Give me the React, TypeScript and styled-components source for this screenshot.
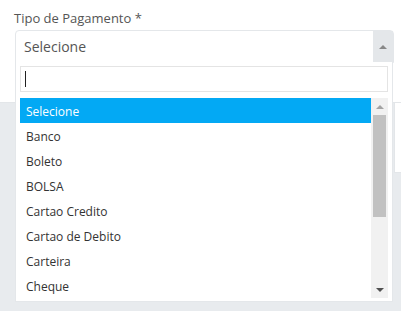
import React from 'react';
import styled, { createGlobalStyle } from 'styled-components';

const GlobalStyle = createGlobalStyle`
  html, body {
    margin: 0;
    padding: 0;
    background: #e8ebee;
    font-family: 'Open Sans', 'Liberation Sans', sans-serif;
  }
  * {
    box-sizing: border-box;
  }
`;

const Page = styled.div`
  width: 401px;
  height: 311px;
  overflow: hidden;
  display: flex;
  flex-direction: column;
`;

const Card = styled.div`
  background: #fff;
  height: 103px;
  padding: 8px 7px 0 15px;
  border-bottom: 1px solid #e3e6e9;
`;

const Label = styled.label`
  display: block;
  margin-left: -1px;
  font-size: 13px;
  line-height: 20px;
  color: #555;
`;

const SelectWrap = styled.div`
  position: relative;
  margin-top: 2px;
`;

const SelectBox = styled.div`
  display: flex;
  height: 33px;
  border: 1px solid #e4e7ea;
  border-radius: 4px 4px 0 0;
  background: #fff;
`;

const SelectText = styled.span`
  flex: 1;
  padding-left: 8px;
  font-size: 14px;
  line-height: 31px;
  color: #555;
`;

const ArrowCell = styled.span`
  width: 20px;
  display: flex;
  align-items: center;
  justify-content: center;
  background: #e4e7ea;
`;

const Triangle = styled.span<{ $dir: 'up' | 'down'; $color: string; $size?: number }>`
  width: 0;
  height: 0;
  border-left: ${({ $size }) => $size ?? 4}px solid transparent;
  border-right: ${({ $size }) => $size ?? 4}px solid transparent;
  ${({ $dir, $color, $size }) =>
    $dir === 'up'
      ? `border-bottom: ${$size ?? 4}px solid ${$color};`
      : `border-top: ${$size ?? 4}px solid ${$color};`}
`;

const Dropdown = styled.div`
  position: absolute;
  top: 32px;
  left: 0;
  width: 378px;
  background: #fff;
  border: 1px solid #e4e7ea;
  border-top: none;
  padding: 4px 4px 3px 4px;
  z-index: 10;
`;

const Search = styled.div`
  height: 26px;
  border: 1px solid #e4e4e4;
  padding: 4px 4px;
  display: flex;
  align-items: center;
`;

const Caret = styled.span`
  width: 1px;
  height: 16px;
  background: #222;
`;

const ListArea = styled.div`
  margin-top: 6px;
  display: flex;
  height: 200px;
`;

const Options = styled.ul`
  flex: 1;
  list-style: none;
  margin: 0;
  padding: 0;
`;

const Option = styled.li<{ $active?: boolean }>`
  height: 25px;
  line-height: 25px;
  padding: 1px 0 0 6px;
  font-size: 12px;
  color: ${({ $active }) => ($active ? '#fff' : '#333')};
  background: ${({ $active }) => ($active ? '#03a9f4' : 'transparent')};
`;

const Scrollbar = styled.div`
  width: 17px;
  background: #f1f1f1;
  display: flex;
  flex-direction: column;
  align-items: center;
`;

const ScrollBtn = styled.div`
  height: 17px;
  display: flex;
  align-items: center;
  justify-content: center;
`;

const Thumb = styled.div`
  width: 13px;
  height: 102px;
  background: #c1c1c1;
`;

const Spacer = styled.div`
  flex: 1;
`;

const Below = styled.div`
  flex: 1;
  display: flex;
  justify-content: flex-end;
`;

const SideBox = styled.div`
  width: 7px;
  height: 70px;
  background: #fff;
  border-left: 1px solid #e3e6e9;
  border-bottom: 1px solid #e3e6e9;
`;

const options = [
  'Selecione',
  'Banco',
  'Boleto',
  'BOLSA',
  'Cartao Credito',
  'Cartao de Debito',
  'Carteira',
  'Cheque',
];

export default function App() {
  return (
    <>
      <GlobalStyle />
      <Page>
        <Card>
          <Label>Tipo de Pagamento *</Label>
          <SelectWrap>
            <SelectBox>
              <SelectText>Selecione</SelectText>
              <ArrowCell>
                <Triangle $dir="up" $color="#888" />
              </ArrowCell>
            </SelectBox>
            <Dropdown>
              <Search>
                <Caret />
              </Search>
              <ListArea>
                <Options>
                  {options.map((o, i) => (
                    <Option key={o} $active={i === 0}>
                      {o}
                    </Option>
                  ))}
                </Options>
                <Scrollbar>
                  <ScrollBtn>
                    <Triangle $dir="up" $color="#a3a3a3" />
                  </ScrollBtn>
                  <Thumb />
                  <Spacer />
                  <ScrollBtn>
                    <Triangle $dir="down" $color="#505050" />
                  </ScrollBtn>
                </Scrollbar>
              </ListArea>
            </Dropdown>
          </SelectWrap>
        </Card>
        <Below>
          <SideBox />
        </Below>
      </Page>
    </>
  );
}
